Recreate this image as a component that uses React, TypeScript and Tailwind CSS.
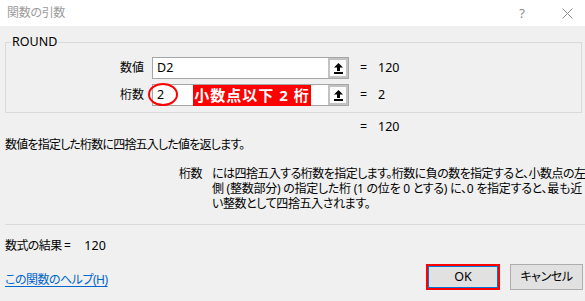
import React from "react";

const font = "font-['Noto_Sans','Noto_Sans_CJK_JP',sans-serif]";

function UpIcon() {
  return (
    <svg width="9" height="11" viewBox="0 0 9 11" className="block">
      <path d="M4.5 0 L9 4.5 L6 4.5 L6 8 L3 8 L3 4.5 L0 4.5 Z" fill="#000" />
      <rect x="0" y="9" width="9" height="2" fill="#000" />
    </svg>
  );
}

function RefField({ value, children }: { value: string; children?: React.ReactNode }) {
  return (
    <div className="relative flex h-[22px] w-[197px] border border-[#a6a6a6] bg-white">
      <div className="flex flex-1 items-center pl-[4px] text-[12.5px] leading-none text-black">{value}</div>
      <div className="flex w-[20px] items-center justify-center border-2 border-[#c2c2c2] bg-[#fbfbfb]">
        <UpIcon />
      </div>
      {children}
    </div>
  );
}

export default function App() {
  return (
    <div className={`relative h-[301px] w-[585px] overflow-hidden bg-[#f0f0f0] text-black ${font} [font-feature-settings:'palt']`}>
      {/* title bar */}
      <div className="flex h-[26px] items-center bg-white pl-[7px]">
        <span className="text-[12px] leading-none tracking-[-0.3px] text-[#9b9b9b]">関数の引数</span>
        <span className="ml-auto mr-[37px] text-[13px] leading-none text-[#8a8a8a]">?</span>
        <svg width="11" height="11" viewBox="0 0 11 11" className="mr-[12px]">
          <path d="M0.5 0.5 L10.5 10.5 M10.5 0.5 L0.5 10.5" stroke="#8a8a8a" strokeWidth="1" />
        </svg>
      </div>

      <div className="pl-[5px] pr-[3px]">
        {/* group box */}
        <div className="relative mt-[16px] h-[71px] border border-[#d9d9d9] pt-[14px]">
          <span className="absolute left-[5px] top-[-9px] bg-[#f0f0f0] px-[1px] text-[12.5px] leading-[16px]">ROUND</span>
          <div className="flex h-[22px] items-center">
            <div className="w-[138px] text-right text-[12px] leading-none">数値</div>
            <div className="ml-[8px]">
              <RefField value="D2" />
            </div>
            <span className="ml-[11px] w-[18px] text-[12.5px] leading-none">=</span>
            <span className="text-[12.5px] leading-none">120</span>
          </div>
          <div className="mt-[5px] flex h-[22px] items-center">
            <div className="w-[138px] text-right text-[12px] leading-none">桁数</div>
            <div className="ml-[8px]">
              <RefField value="2">
                <div className="absolute left-[-5px] top-[-2px] h-[23px] w-[30px] rounded-[50%] border-2 border-[#ff0000]" />
                <div className="absolute left-[40px] top-[0px] flex h-[21px] w-[118px] items-center justify-center bg-[#ff0000] text-[15px] font-bold leading-none tracking-[1px] text-white">
                  小数点以下 2 桁
                </div>
              </RefField>
            </div>
            <span className="ml-[11px] w-[18px] text-[12.5px] leading-none">=</span>
            <span className="text-[12.5px] leading-none">2</span>
          </div>
        </div>

        {/* overall result */}
        <div className="mt-[6px] flex h-[16px] items-center pl-[355px] text-[12.5px] leading-none">
          <span className="w-[18px]">=</span>
          <span>120</span>
        </div>

        {/* description */}
        <div className="mt-[2px] h-[16px] whitespace-nowrap text-[12px] leading-[16px] tracking-[-0.8px]">数値を指定した桁数に四捨五入した値を返します。</div>

        {/* argument description */}
        <div className="mt-[13px] flex text-[12px] leading-[15px]">
          <div className="ml-[174px] w-[33px] shrink-0 tracking-[-0.6px]">桁数</div>
          <div className="flex shrink-0 flex-col whitespace-nowrap">
            <span className="tracking-[-0.55px]">には四捨五入する桁数を指定します。桁数に負の数を指定すると、小数点の左</span>
            <span className="tracking-[-0.25px]">側 (整数部分) の指定した桁 (1 の位を 0 とする) に、0 を指定すると、最も近</span>
            <span className="tracking-[-0.4px]">い整数として四捨五入されます。</span>
          </div>
        </div>
      </div>

      <div className="ml-[5px] mt-[13px] h-px bg-[#dadada]" />

      <div className="px-[5px]">
        <div className="mt-[13px] flex h-[16px] items-center text-[12px] leading-none">
          <span className="tracking-[-0.6px]">数式の結果 =</span>
          <span className="ml-[14px] text-[12.5px]">120</span>
        </div>

        <div className="mt-[10px] flex items-center">
          <a className="mt-[6px] text-[12px] leading-none tracking-[-0.5px] text-[#0066cc] underline underline-offset-2">この関数のヘルプ(H)</a>
          <div className="ml-auto mr-[-3px] flex gap-[10px]">
            <div className="flex h-[26px] w-[74px] border-2 border-[#ff0000]">
              <div className="flex flex-1 items-center justify-center border border-[#0078d7] bg-[#e1e1e1] text-[12.5px] leading-none">OK</div>
            </div>
            <div className="flex h-[26px] w-[73px] items-center justify-center border border-[#adadad] bg-[#e1e1e1] text-[12px] leading-none tracking-[-0.4px]">キャンセル</div>
          </div>
        </div>
      </div>
    </div>
  );
}
